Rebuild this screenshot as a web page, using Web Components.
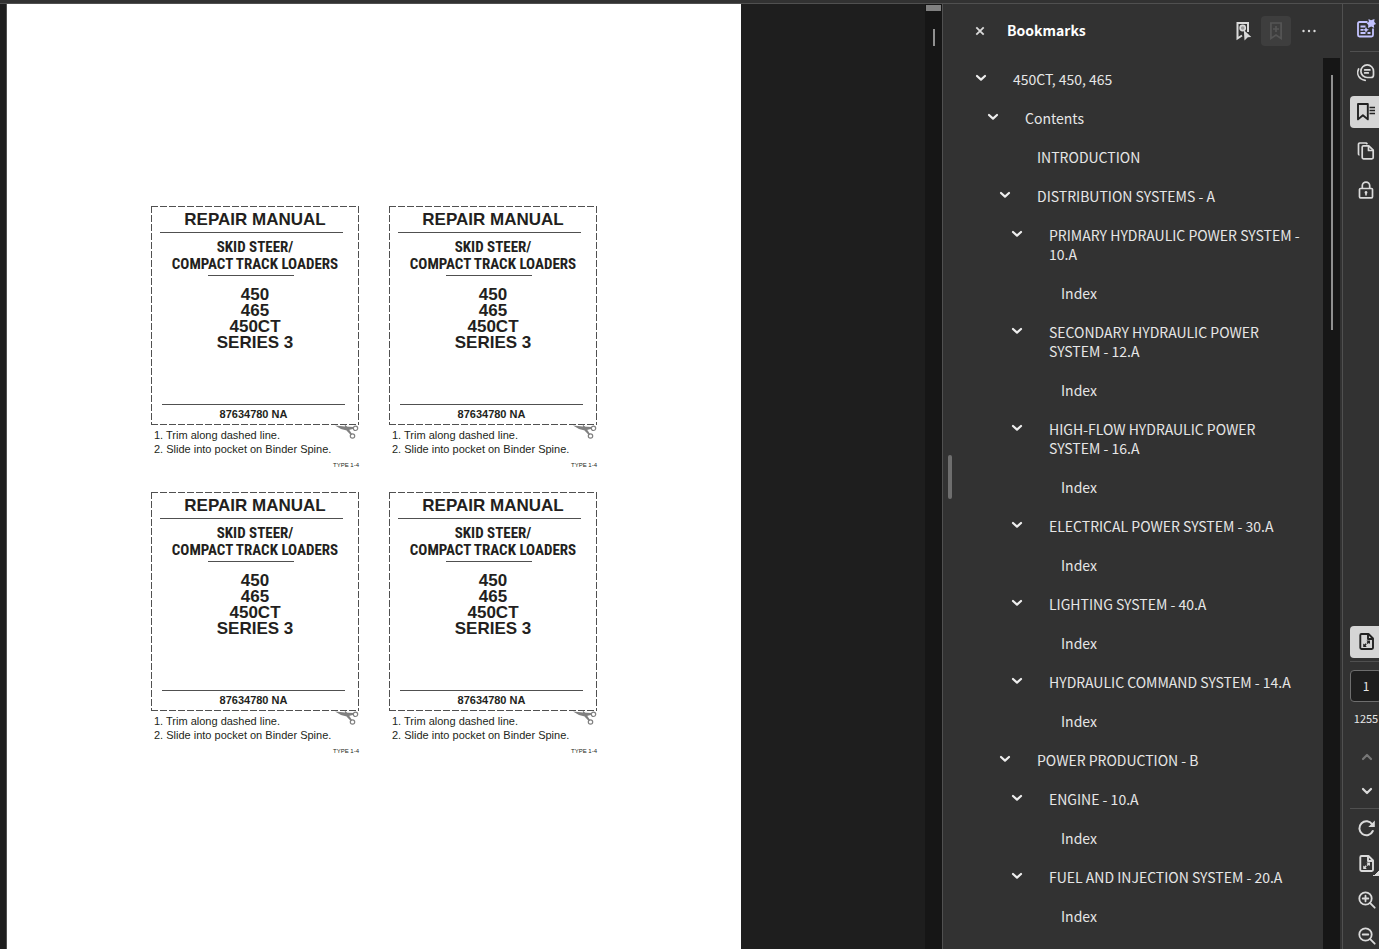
<!DOCTYPE html>
<html lang="en">
<head>
<meta charset="utf-8">
<title>450CT, 450, 465 - Repair Manual</title>
<style>
  html, body { margin: 0; height: 100%; overflow: hidden; }
  body { background: #323232; color: #e6e6e6; font: 14px/19px "Noto Sans CJK SC", "Noto Sans", sans-serif; }
</style>
</head>
<body>
<pdf-viewer></pdf-viewer>

<script>
const ICONS = {
  assistant: '<g fill="none" stroke="#c3c3ff" stroke-width="1.800"><path d="M11.500 3H3.500Q2 3 2 4.500V16Q2 17.500 3.500 17.500H15.500Q17 17.500 17 16V9.500"/><path d="M4.500 7.500h5M4.500 10.800h3M4.500 14h5M11.500 14h3"/></g><path fill="#c3c3ff" d="m12.500 0 2.500 1.300L18.500 0l-.3 2.800L20 5l-2.200 1 .4 3-3-1.400L12 9l.3-3L10.500 4l2.300-1zM10 8l1 2 2 .8-2 1-1 2-1-2-2-1 2-.8z"/>',
  comment: '<g fill="none" stroke="#dadada" stroke-width="1.700" stroke-linecap="round"><path d="M17.500 8.200a6.300 6.300 0 1 0-6.300 6.300H15q2.500 0 2.500-2.500z" stroke-linejoin="round"/><path d="M8.700 6.900h5.200M8.700 9.900h3.600M2.600 6a7.600 7.600 0 0 0 2 9.500q1.600 1.500 4.600 1.800"/></g>',
  bookmarks: '<g fill="none" stroke="#222" stroke-width="1.900"><path d="M2 2h9.800v15.400l-4.900-4.200L2 17.400z" stroke-linejoin="round"/><path d="M13.500 5.500H19M13.500 8.500H19M13.500 11.500H19" stroke-width="1.500"/></g>',
  pages: '<g fill="none" stroke="#dadada" stroke-width="1.700" stroke-linejoin="round"><path d="M7.500 4.800h5.300l4.400 4.400v7.300q0 1.300-1.300 1.300H7.500q-1.300 0-1.300-1.300V6.100q0-1.300 1.300-1.300z"/><path d="M12.500 5v4.500H17M3.500 14Q2.500 14 2.500 12.500V3.300Q2.500 2 3.800 2H10l1.500 1"/></g>',
  lock: '<g fill="none" stroke="#dadada" stroke-width="1.700"><rect x="3.500" y="8.500" width="13" height="9.300" rx="1"/><path d="M6.300 8V5.800a3.700 3.700 0 0 1 7.400 0V8"/></g><path fill="#dadada" d="M10 11a1.500 1.500 0 0 1 .8 2.700V15.500H9.200V13.700A1.500 1.500 0 0 1 10 11z"/>',
  fit: '<g fill="none" stroke="currentColor" stroke-width="1.900" stroke-linejoin="round"><path d="M5.500 2h7l4.500 4.500v9.300q0 1.200-1.200 1.200H5.500q-1.200 0-1.200-1.200V3.200Q4.300 2 5.500 2z"/><path d="M12 2.500V7h4.500"/></g><path fill="currentColor" d="M10.500 8.500H14V12l-1.200-1-1.100 1.100-1.200-1.200 1-1zM10.700 14.900H7.200v-3.500l1.200 1 1.100-1.100 1.200 1.200-1.100 1.100z"/>',
  up: '<path fill="none" stroke="#777" stroke-width="2.200" stroke-linecap="round" stroke-linejoin="round" d="m7 12 4-4 4 4"/>',
  down: '<path fill="none" stroke="#dadada" stroke-width="2.200" stroke-linecap="round" stroke-linejoin="round" d="m7 8 4 4 4-4"/>',
  rotate: '<path fill="none" stroke="#dadada" stroke-width="2" stroke-linecap="round" d="M16.300 6.500A7 7 0 1 0 16.800 13"/><path fill="#dadada" d="M18.800 2.500V9h-6.500z"/>',
  zoomin: '<g fill="none" stroke="#dadada" stroke-width="1.800" stroke-linecap="round"><circle cx="9.500" cy="8.500" r="6.200"/><path d="m14.200 13.200 4.500 4.500M6.700 8.500h5.600M9.500 5.700v5.600"/></g>',
  zoomout: '<g fill="none" stroke="#dadada" stroke-width="1.800" stroke-linecap="round"><circle cx="9.500" cy="8.500" r="6.200"/><path d="m14.200 13.200 4.500 4.500M6.700 8.500h5.600"/></g>',
  close: '<path stroke="#dadada" stroke-width="1.800" d="m6.300 6.300 7.400 7.400m0-7.400-7.400 7.400"/>',
  find: '<path fill="none" stroke="#dadada" stroke-width="2" d="M9 14.500 4.500 17.500V2H15v9"/><path fill="#dadada" d="m10.800 9 7.500 7-3.500.3L11.500 19.500z"/><circle cx="9.700" cy="7" r="2.600" fill="#999" stroke="#dadada" stroke-width="1.600"/>',
  add: '<path fill="none" stroke="#555" stroke-width="1.700" d="M4.900 2h10.200v15.500L10 14l-5.100 3.500zM7 8h6M10 5v6"/>',
  more: '<g fill="#dadada"><circle cx="4.500" cy="10" r="1.200"/><circle cx="10" cy="10" r="1.200"/><circle cx="15.500" cy="10" r="1.200"/></g>'
};

class IconButton extends HTMLElement {
  connectedCallback() {
    this.attachShadow({ mode: 'open' }).innerHTML = `
      <style>
        :host { display: block; flex: none; width: 32px; height: 32px; color: #dadada; }
        :host([short]) { height: 26px; }
        :host([selected]) { color: #222; }
        button { display: grid; place-items: center; width: 100%; height: 100%; padding: 0; border: 0; border-radius: 4px; background: none; color: inherit; }
        :host([selected]) button { background: #d5d5d5; }
        :host([disabled]) button { background: #3e3e3e; }
        svg { display: block; width: 20px; height: 20px; }
      </style>
      <button type="button" aria-label="${this.getAttribute('label')}"><svg viewBox="0 0 20 20" aria-hidden="true">${ICONS[this.getAttribute('icon')]}</svg></button>`;
  }
}
customElements.define('icon-button', IconButton);

class SpineLabel extends HTMLElement {
  connectedCallback() {
    this.attachShadow({ mode: 'open' }).innerHTML = `
      <style>
        :host { display: block; color: #231f20; font-family: "Liberation Sans", sans-serif; }
        .card {
          --d: #505050 0 7px, transparent 7px 9px;
          display: flex; flex-direction: column; box-sizing: border-box; height: 219px; padding: 4px 0 1px;
          text-align: center; font-weight: bold; white-space: nowrap;
          background:
            repeating-linear-gradient(90deg, var(--d)) top / 100% 1px no-repeat,
            repeating-linear-gradient(90deg, var(--d)) bottom / 100% 1px no-repeat,
            repeating-linear-gradient(var(--d)) left / 1px 100% no-repeat,
            repeating-linear-gradient(var(--d)) right / 1px 100% no-repeat;
        }
        h2, h3, p, ol { margin: 0; }
        h2 { font-size: 17px; line-height: 20px; padding-bottom: 2px; margin: 0 16px 0 9px; border-bottom: 1px solid #505050; }
        h2 span { display: block; margin-right: -7px; }
        h3 { font: bold 15px/17px "Liberation Sans Narrow", "Roboto Condensed", "Liberation Sans", sans-serif; padding-top: 6px; }
        hr { width: 86px; margin: 2px 0 0 57px; border: 0; border-top: 1px solid #505050; }
        .models { padding-top: 11px; font-size: 17px; line-height: 16px; }
        .num { margin: auto 14px 0 11px; border-top: 1px solid #505050; padding: 2px 0; font-size: 11px; line-height: 15px; }
        .foot { position: relative; padding: 3px 0 0 3px; font-size: 11px; line-height: 14px; white-space: nowrap; }
        ol { padding: 0; list-style: none; }
        .type { text-align: right; font-size: 6px; line-height: 14px; padding-top: 2px; }
        svg { position: absolute; right: 0; top: -1px; width: 24px; height: 16px; }
      </style>
      <section class="card">
        <h2><span>REPAIR MANUAL</span></h2>
        <h3>SKID STEER/<br>COMPACT TRACK LOADERS</h3>
        <hr>
        <p class="models">450<br>465<br>450CT<br>SERIES 3</p>
        <p class="num">87634780 NA</p>
      </section>
      <div class="foot">
        <ol><li>1. Trim along dashed line.</li><li>2. Slide into pocket on Binder Spine.</li></ol>
        <p class="type">TYPE 1-4</p>
        <svg viewBox="0 0 24 16" aria-hidden="true"><path fill="#808080" d="M0 1.500 10 2.500 18.500 3v1.800L12 6.500 6 5zM9.500 0l3.500 4 4 6-1.200 1L11 6z"/><g fill="none" stroke="#808080" stroke-width="1.200"><circle cx="20.500" cy="4.300" r="2.200"/><circle cx="17.500" cy="12" r="2.200"/></g></svg>
      </div>`;
  }
}
customElements.define('spine-label', SpineLabel);

class DocumentPane extends HTMLElement {
  connectedCallback() {
    this.attachShadow({ mode: 'open' }).innerHTML = `
      <style>
        :host { display: flex; min-width: 0; min-height: 0; overflow: hidden; }
        .canvas { flex: 1; min-width: 0; display: flex; padding: 0 calc(20% - 4px) 0 6px; background: #1e1e1e; box-sizing: border-box; }
        main { flex: 1; display: grid; grid-template-columns: 208px 208px; gap: 20px 30px; align-content: start; padding: 202px 0 0 144px; background: #fff; border-left: 1px solid #505050; }
        .bar { flex: none; width: 17px; box-sizing: border-box; padding: 1px 0 0 1px; background: #161616; }
        .thumb { width: 15px; height: 6px; background: #808080; }
        .mark { width: 2px; height: 17px; margin: 18px auto 0; background: #909090; }
      </style>
      <div class="canvas"><main><spine-label></spine-label><spine-label></spine-label><spine-label></spine-label><spine-label></spine-label></main></div>
      <div class="bar"><div class="thumb"></div><div class="mark"></div></div>`;
  }
}
customElements.define('document-pane', DocumentPane);

class BookmarkItem extends HTMLElement {
  connectedCallback() {
    const leaf = this.hasAttribute('leaf');
    this.attachShadow({ mode: 'open' }).innerHTML = `
      <style>
        :host { display: flex; align-items: flex-start; padding: 10px 20px 10px calc(var(--level) * 12px); }
        button, i { flex: none; width: 20px; height: 15px; margin-right: 22px; padding: 0; border: 0; background: none; }
        svg { display: block; width: 20px; height: 15px; }
        a { color: #e6e6e6; text-decoration: none; }
      </style>
      ${leaf ? '<i></i>' : '<button type="button" aria-label="Collapse"><svg viewBox="0 0 20 15" aria-hidden="true"><path fill="none" stroke="#eee" stroke-width="2.200" stroke-linecap="round" stroke-linejoin="round" d="m6 6 4 3.600L14 6"/></svg></button>'}
      <a href="#"><slot></slot></a>`;
    this.style.setProperty('--level', this.getAttribute('level'));
  }
}
customElements.define('bookmark-item', BookmarkItem);

const BOOKMARKS = [
  [0, '450CT, 450, 465'], [1, 'Contents'], [2, 'INTRODUCTION', 1], [2, 'DISTRIBUTION SYSTEMS - A'],
  [3, 'PRIMARY HYDRAULIC POWER SYSTEM - 10.A'], [4, 'Index', 1],
  [3, 'SECONDARY HYDRAULIC POWER SYSTEM - 12.A'], [4, 'Index', 1],
  [3, 'HIGH-FLOW HYDRAULIC POWER SYSTEM - 16.A'], [4, 'Index', 1],
  [3, 'ELECTRICAL POWER SYSTEM - 30.A'], [4, 'Index', 1],
  [3, 'LIGHTING SYSTEM - 40.A'], [4, 'Index', 1],
  [3, 'HYDRAULIC COMMAND SYSTEM - 14.A'], [4, 'Index', 1],
  [2, 'POWER PRODUCTION - B'], [3, 'ENGINE - 10.A'], [4, 'Index', 1],
  [3, 'FUEL AND INJECTION SYSTEM - 20.A'], [4, 'Index', 1]
];

class BookmarksPanel extends HTMLElement {
  connectedCallback() {
    this.attachShadow({ mode: 'open' }).innerHTML = `
      <style>
        :host { display: flex; min-height: 0; border: solid #505050; border-width: 0 1px; background: #323232; }
        .grip { flex: none; width: 4px; height: 44px; margin: auto 5px; border-radius: 2px; background: #6e6e6e; }
        .panel { flex: 1; min-width: 0; display: flex; flex-direction: column; }
        header { flex: none; display: flex; align-items: center; height: 54px; box-sizing: border-box; padding: 0 18px 0 8px; }
        h1 { flex: 1; margin: 0 0 2px 12px; font-size: 14px; line-height: 20px; color: #fff; }
        icon-button { height: 30px; width: 30px; }
        icon-button + icon-button { margin-left: 3px; }
        .body { flex: 1; min-height: 0; display: flex; }
        nav { flex: 1; min-width: 0; overflow: hidden; padding: 2px 0 0 14px; }
        .bar { flex: none; width: 17px; margin-right: 2px; background: #161616; }
        .thumb { width: 2px; height: 255px; margin: 17px auto 0; background: #909090; }
      </style>
      <div class="grip"></div>
      <div class="panel">
        <header>
          <icon-button icon="close" label="Close"></icon-button>
          <h1>Bookmarks</h1>
          <icon-button icon="find" label="Find current bookmark"></icon-button>
          <icon-button icon="add" label="New bookmark" disabled></icon-button>
          <icon-button icon="more" label="Options"></icon-button>
        </header>
        <div class="body">
          <nav>${BOOKMARKS.map(([l, t, leaf]) => `<bookmark-item level="${l}"${leaf ? ' leaf' : ''}>${t}</bookmark-item>`).join('')}</nav>
          <div class="bar"><div class="thumb"></div></div>
        </div>
      </div>`;
  }
}
customElements.define('bookmarks-panel', BookmarksPanel);

class ToolRail extends HTMLElement {
  connectedCallback() {
    this.attachShadow({ mode: 'open' }).innerHTML = `
      <style>
        :host { display: flex; flex-direction: column; justify-content: space-between; min-height: 0; overflow: hidden; padding: 9px 0 0 7px; background: #323232; }
        .group { display: flex; flex-direction: column; }
        hr { width: 100%; height: 1px; margin: 0; border: 0; background: #505050; }
        .top hr { margin: 6px 0 5px; }
        .tools { display: flex; flex-direction: column; gap: 7px; }
        .pager hr { margin: 3px 0 8px; }
        .pager .nav + hr { margin: 0; }
        input { flex: none; box-sizing: border-box; width: 32px; height: 32px; padding: 0 0 2px; border: 1px solid #6e6e6e; border-radius: 4px; background: #1e1e1e; color: #e6e6e6; font: 12px/19px "Noto Sans CJK SC", sans-serif; text-align: center; }
        label { display: block; width: 32px; margin: 7px 0 13px; font-size: 11px; line-height: 19px; text-align: center; }
        .nav { display: flex; flex-direction: column; gap: 2px; margin-bottom: 1px; }
        .view { display: flex; flex-direction: column; gap: 10px; padding-top: 6px; }
        .fit { position: relative; }
        .fit::after { content: ""; position: absolute; right: 0; bottom: 1px; width: 6px; height: 6px; background: linear-gradient(135deg, transparent 50%, #dadada 50%); }
      </style>
      <div class="group top">
        <icon-button icon="assistant" label="AI Assistant"></icon-button>
        <hr>
        <div class="tools">
          <icon-button icon="comment" label="Comments"></icon-button>
          <icon-button icon="bookmarks" label="Bookmarks" selected></icon-button>
          <icon-button icon="pages" label="Page thumbnails"></icon-button>
          <icon-button icon="lock" label="Security"></icon-button>
        </div>
      </div>
      <div class="group pager">
        <icon-button icon="fit" label="Page display" selected></icon-button>
        <hr>
        <input id="page" value="1">
        <label for="page">1255</label>
        <div class="nav">
          <icon-button icon="up" label="Previous page"></icon-button>
          <icon-button icon="down" label="Next page"></icon-button>
        </div>
        <hr>
        <div class="view">
          <icon-button short icon="rotate" label="Rotate"></icon-button>
          <div class="fit"><icon-button short icon="fit" label="Fit page"></icon-button></div>
          <icon-button short icon="zoomin" label="Zoom in"></icon-button>
          <icon-button short icon="zoomout" label="Zoom out"></icon-button>
        </div>
      </div>`;
  }
}
customElements.define('tool-rail', ToolRail);

class PdfViewer extends HTMLElement {
  connectedCallback() {
    this.attachShadow({ mode: 'open' }).innerHTML = `
      <style>
        :host { display: grid; height: 100vh; box-sizing: border-box; padding-top: 3px; background: #323232; }
        .work { display: grid; grid-template-columns: minmax(0, 1fr) 401px 36px; grid-template-rows: minmax(0, 1fr); min-height: 0; border-top: 1px solid #505050; }
      </style>
      <div class="work"><document-pane></document-pane><bookmarks-panel></bookmarks-panel><tool-rail></tool-rail></div>`;
  }
}
customElements.define('pdf-viewer', PdfViewer);
</script>
</body>
</html>
